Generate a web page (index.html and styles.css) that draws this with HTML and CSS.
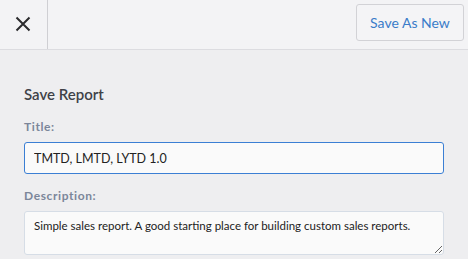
FILE: index.html
```html
<!DOCTYPE html>
<html>
<head>
<meta charset="utf-8">
<link rel="stylesheet" href="styles.css">
</head>
<body>
<header class="topbar">
  <button class="close" aria-label="Close">
    <svg width="16" height="16" viewBox="0 0 16 16"><path d="M1.5 1.5 L14.5 14.5 M14.5 1.5 L1.5 14.5" stroke="#2b2b2e" stroke-width="2" fill="none"/></svg>
  </button>
  <div class="spacer"></div>
  <button class="save-new">Save As New</button>
</header>
<main class="content">
  <h2 class="heading">Save Report</h2>
  <label class="label">Title:</label>
  <input class="field title" type="text" value="TMTD, LMTD, LYTD 1.0">
  <label class="label label-desc">Description:</label>
  <textarea class="field desc">Simple sales report. A good starting place for building custom sales reports.</textarea>
</main>
</body>
</html>
```
FILE: styles.css
```css
* { box-sizing: border-box; }
html, body { margin: 0; padding: 0; }
body {
  width: 468px;
  height: 259px;
  overflow: hidden;
  background: #eeeef0;
  font-family: Lato, "Open Sans", sans-serif;
  color: #3c3f44;
}
.topbar {
  display: flex;
  align-items: stretch;
  height: 50px;
  background: #f3f3f5;
  border-bottom: 1px solid #dcdce0;
}
.close {
  width: 48px;
  border: 0;
  border-right: 1px solid #cfcfd3;
  background: transparent;
  padding: 0 2px 2px 0;
  display: flex;
  align-items: center;
  justify-content: center;
}
.spacer { flex: 1; }
.save-new {
  margin: 4px 4px 0 0;
  height: 37px;
  width: 108px;
  border: 1px solid #d2d2d6;
  border-radius: 3px;
  background: #f4f4f6;
  color: #3a7cc9;
  font-family: Lato, sans-serif;
  font-size: 14px;
  padding: 0;
}
.content {
  padding: 0 24px;
  display: flex;
  flex-direction: column;
}
.heading {
  margin: 34px 0 0;
  font-size: 15px;
  font-weight: 600;
  line-height: 20px;
  color: #3e4147;
}
.label {
  margin-top: 16px;
  font-size: 12px;
  font-weight: 700;
  letter-spacing: 0.6px;
  color: #7b869a;
  line-height: 14px;
}
.label-desc { margin-top: 15px; }
.field {
  width: 420px;
  margin-top: 8px;
  background: #fafafa;
  border-radius: 3px;
  font-family: Lato, sans-serif;
  font-size: 12.5px;
  color: #222;
  padding: 0 9px;
}
.title {
  height: 32px;
  border: 1px solid #3b7fd4;
  outline: none;
}
.desc {
  height: 44px;
  border: 1px solid #d6dde6;
  font-size: 11.5px;
  padding-top: 6px;
  line-height: 16px;
  resize: vertical;
  overflow: hidden;
}
```
